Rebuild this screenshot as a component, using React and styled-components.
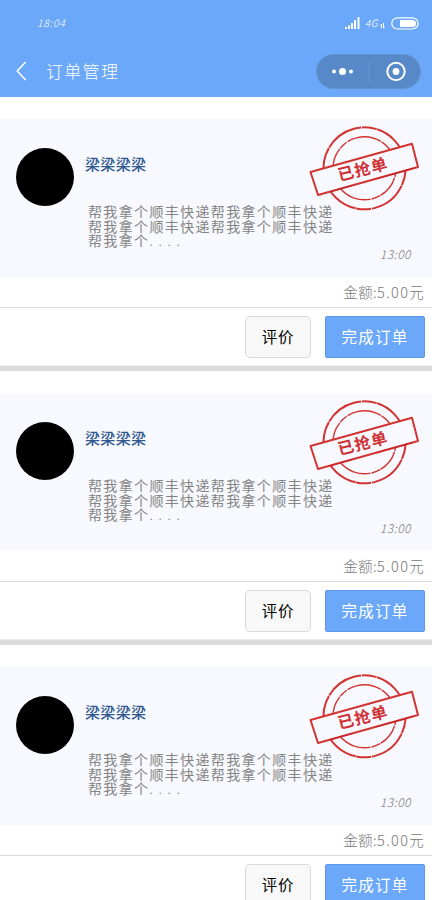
import React from "react";
import styled, { createGlobalStyle } from "styled-components";

const Global = createGlobalStyle`
  * { box-sizing: border-box; }
  html, body { margin: 0; height: 900px; overflow: hidden; background: #fff; }
  body { font-family: "Noto Sans", "Noto Sans CJK SC", sans-serif; }
  button { font: inherit; margin: 0; }
`;
const Screen = styled.main`
  width: 432px; height: 900px; overflow: hidden; background: #fff;
  font-family: "Noto Sans CJK SC", sans-serif; font-weight: 300;
`;
const Header = styled.header`
  height: 97px; background: #6ba8fa; color: #fff;
`;
const StatusBar = styled.div`
  height: 45px; padding: 1px 13px 0 37px;
  display: flex; align-items: center; justify-content: space-between;
`;
const Clock = styled.span`
  font-size: 10.5px; line-height: 12px; font-style: italic; letter-spacing: .7px;
`;
const Signals = styled.div`
  display: flex; align-items: center; gap: 5px;
`;
const Network = styled.span`
  display: flex; align-items: flex-end; gap: 2px; width: 21px;
  font-size: 10px; line-height: 12px; font-style: italic; letter-spacing: .3px;
`;
const NavBar = styled.div`
  height: 52px; padding: 0 11px 0 16px; display: flex; align-items: center;
`;
const Title = styled.h1`
  margin: 0 auto 0 19px; font-size: 17px; line-height: 22px; font-weight: 300; letter-spacing: 1.3px;
`;
const Capsule = styled.div`
  width: 105px; height: 35px; border-radius: 18px; background: #5789c9;
  border: 1px solid #6494d2; display: flex; align-items: center; justify-content: center;
`;
const Card = styled.article`
  height: 274px; padding-top: 22px; border-bottom: 5px solid #dbdbdb;
  box-shadow: inset 0 -1px #ececec;
`;
const Details = styled.section`
  position: relative; height: 158px; padding: 29px 16px 0; background: #f8f9ff;
  display: flex; gap: 11px;
`;
const Avatar = styled.div`
  width: 58px; height: 58px; flex: none; border-radius: 50%; background: #000;
`;
const Content = styled.div`
  flex: 1; display: flex; flex-direction: column;
`;
const Name = styled.h2`
  margin: 6px 0 0; font-size: 15px; line-height: 20px; font-weight: 500;
  letter-spacing: .35px; color: #30588f;
`;
const Message = styled.p`
  margin: 30px 0 0 3px; width: 250px; font-size: 14px; line-height: 14.5px;
  letter-spacing: 1.35px; font-weight: 400; color: #848484; white-space: pre-line;
`;
const Dots = styled.span`
  font-family: "Liberation Sans", sans-serif; font-size: 12px; line-height: 14px; letter-spacing: 5.7px;
`;
const Time = styled.time`
  align-self: flex-end; margin: -3px 5px 0 0; font-size: 12px; line-height: 16px;
  font-style: italic; letter-spacing: .5px; color: #777;
`;
const StampDrawing = styled.svg`
  position: absolute; left: 300px; top: 0; overflow: visible;
`;
const Amount = styled.div`
  height: 31px; padding: 0 7px 2px; border-bottom: 1px solid #d9d9d9;
  display: flex; align-items: center; justify-content: flex-end;
  font-size: 14.5px; letter-spacing: .4px; color: #777;
`;
const Value = styled.span` letter-spacing: 1.3px; `;
const Actions = styled.div`
  padding: 8px 7px 0; display: flex; justify-content: flex-end; gap: 14px;
`;
const Button = styled.button`
  width: ${p => p.$primary ? 100 : 66}px; height: 42px; padding: 0 0 2px;
  border: 1px solid ${p => p.$primary ? "#5b96e8" : "#d8d8d8"};
  border-radius: ${p => p.$primary ? 2 : 5}px;
  background: ${p => p.$primary ? "#6ba8fa" : "#f8f8f8"};
  color: ${p => p.$primary ? "#fff" : "#000"};
  font-size: 15.5px; font-weight: 400; letter-spacing: ${p => p.$primary ? 1.2 : .8}px;
`;

function BackIcon() {
  return <svg width="11" height="20" viewBox="0 0 11 20" fill="none" stroke="#fff" strokeWidth="1.5"><path d="M9.7 1 1.2 10l8.5 9" /></svg>;
}
function SignalIcon() {
  return <svg width="15" height="12" fill="#fff"><path d="M0 10h2v2H0zM3 8.500h2V12H3zM6 6h2v6H6zM9 3h2v9H9zM12.500 0h2v12h-2z" /></svg>;
}
function DataIcon() {
  return <svg width="5" height="6" fill="none" stroke="#fff"><path d="M1.500 1v4M1.500 1 .3 2.500M3.500 0v5M3.500 5l1.200-1" /></svg>;
}
function BatteryIcon() {
  return <svg width="28" height="13"><rect x=".8" y=".8" width="26.200" height="11.200" rx="5.600" fill="none" stroke="#fff" strokeWidth="1.200" /><path d="M9 3h12.500a3.500 3.500 0 0 1 0 7H9z" fill="#fff" /></svg>;
}
function CapsuleIcons() {
  return <svg width="103" height="33" viewBox="0 0 103 33">
    <g fill="#fff"><circle cx="17" cy="16.500" r="2" /><circle cx="25.500" cy="16.500" r="3.500" /><circle cx="34" cy="16.500" r="2" /><circle cx="79" cy="16.500" r="3.400" /></g>
    <path d="M52 6v21" stroke="#6493d0" /><circle cx="79" cy="16.500" r="8.700" fill="none" stroke="#fff" strokeWidth="2" />
  </svg>;
}
const StampText = styled.text`
  font-family: "Noto Sans CJK SC", sans-serif; font-size: 16px; font-weight: 700; letter-spacing: 1px; fill: #cf3136;
`;
function Stamp() {
  return <StampDrawing width="132" height="106" viewBox="0 4 132 106">
    <g fill="none" stroke="#d23431">
      <g transform="rotate(-15 64.5 53.3)">
        <circle cx="64.5" cy="53.3" r="41" strokeWidth="2" strokeDasharray="28 .6 39 .8 15 .5 48 .7" />
        <circle cx="64.5" cy="53.3" r="31.5" strokeWidth="1.4" strokeDasharray="17 .8 23 .6 9 1 35 .8" />
      </g>
      <path d="M10.500 57 112 28.800l6 23.200L18 80z" fill="#f8f9ff" strokeWidth="2" strokeLinejoin="round" />
      <path d="M30 76.700l22-6.200m24-6.600 37-10.500" stroke="#c52428" strokeWidth="1" />
    </g>
    <StampText x="39.500" y="66" transform="rotate(-14 39.5 66)">已抢单</StampText>
  </StampDrawing>;
}
function OrderCard() {
  return <Card>
    <Details>
      <Avatar />
      <Content>
        <Name>梁梁梁梁</Name>
        <Message>{"帮我拿个顺丰快递帮我拿个顺丰快递\n帮我拿个顺丰快递帮我拿个顺丰快递\n帮我拿个"}<Dots>....</Dots></Message>
        <Time>13:00</Time>
      </Content>
      <Stamp />
    </Details>
    <Amount>金额:<Value>5.00元</Value></Amount>
    <Actions><Button>评价</Button><Button $primary>完成订单</Button></Actions>
  </Card>;
}
export default function App() {
  return <><Global /><Screen>
    <Header>
      <StatusBar><Clock>18:04</Clock><Signals><SignalIcon /><Network>4G<DataIcon /></Network><BatteryIcon /></Signals></StatusBar>
      <NavBar><BackIcon /><Title>订单管理</Title><Capsule><CapsuleIcons /></Capsule></NavBar>
    </Header>
    {[1, 2, 3].map(id => <OrderCard key={id} />)}
  </Screen></>;
}
